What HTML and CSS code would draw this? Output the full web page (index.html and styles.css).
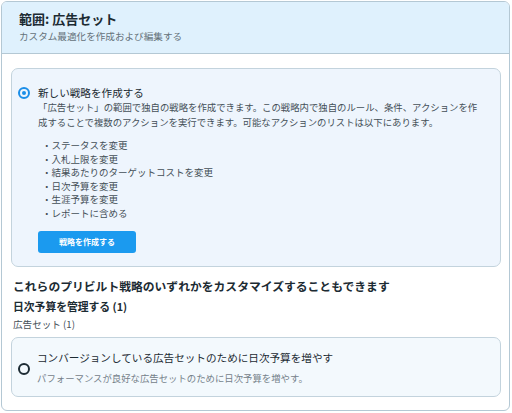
FILE: index.html
```html
<!DOCTYPE html>
<html lang="ja">
<head>
  <meta charset="UTF-8">
  <meta name="viewport" content="width=device-width, initial-scale=1.0">
  <title>範囲: 広告セット</title>
  <link rel="stylesheet" href="styles.css">
</head>
<body>

  <div class="panel">
    <div class="panel-header">
      <h1 class="panel-title">範囲: 広告セット</h1>
      <p class="panel-sub">カスタム最適化を作成および編集する</p>
    </div>

    <div class="panel-body">
      <div class="option option-selected">
        <span class="radio radio-on"></span>
        <div class="option-content">
          <div class="option-title">新しい戦略を作成する</div>
          <p class="option-desc">「広告セット」の範囲で独自の戦略を作成できます。この戦略内で独自のルール、条件、アクションを作成することで複数のアクションを実行できます。可能なアクションのリストは以下にあります。</p>
          <ul class="action-list">
            <li>ステータスを変更</li>
            <li>入札上限を変更</li>
            <li>結果あたりのターゲットコストを変更</li>
            <li>日次予算を変更</li>
            <li>生涯予算を変更</li>
            <li>レポートに含める</li>
          </ul>
          <button class="btn-primary">戦略を作成する</button>
        </div>
      </div>

      <h2 class="section-title">これらのプリビルト戦略のいずれかをカスタマイズすることもできます</h2>
      <h3 class="group-title">日次予算を管理する (1)</h3>
      <div class="group-sub">広告セット (1)</div>

      <div class="option option-plain">
        <span class="radio"></span>
        <div class="option-content">
          <div class="option-title">コンバージョンしている広告セットのために日次予算を増やす</div>
          <p class="option-desc muted">パフォーマンスが良好な広告セットのために日次予算を増やす。</p>
        </div>
      </div>
    </div>
  </div>

</body>
</html>
```

FILE: styles.css
```css
body {
  margin: 0;
  padding: 1px;
  font-family: "Noto Sans CJK JP", "Noto Sans", sans-serif;
  color: #1c2b33;
  background: #ffffff;
}
.panel {
  width: 509px;
  height: 410px;
  border: 1px solid #b4c8d4;
  border-radius: 6px;
  overflow: hidden;
  box-sizing: border-box;
}
.panel-header {
  background-color: #dff1fd;
  border-bottom: 1px solid #b4c8d4;
  padding: 8px 18px 9px 17px;
  height: 52px;
  box-sizing: border-box;
}
.panel-title {
  margin: 0;
  font-size: 13px;
  line-height: 18px;
  font-weight: bold;
}
.panel-sub {
  margin: 1px 0 0;
  font-size: 9.6px;
  line-height: 14px;
  color: #65717a;
}
.panel-body {
  padding: 14px 8px 0 9px;
}
.option {
  display: flex;
  gap: 8px;
  border: 1px solid #c3d3dd;
  border-radius: 7px;
}
.option-selected {
  background-color: #eef5fd;
  padding: 17px 18px 13px 5px;
}
.option-plain {
  background-color: #f3f9fd;
  padding: 13px 12px 10px 5px;
  align-items: center;
  margin-top: 6px;
}
.radio {
  flex: none;
  width: 12px;
  height: 12px;
  border: 2px solid #1c2b33;
  border-radius: 50%;
  box-sizing: border-box;
  margin-top: 1px;
  margin-left: 1px;
  position: relative;
}
.radio-on {
  border-color: #1b8ee8;
}
.radio-on::after {
  content: "";
  position: absolute;
  left: 2px;
  top: 2px;
  width: 4px;
  height: 4px;
  border-radius: 50%;
  background-color: #1b8ee8;
}
.option-plain .radio {
  margin-left: 1px;
  margin-right: -1px;
}
.option-content {
  flex: 1;
}
.option-title {
  font-size: 10.6px;
  line-height: 14px;
}
.option-desc {
  margin: 0;
  font-size: 9.4px;
  line-height: 15px;
  color: #444f57;
}
.muted {
  color: #75818a;
  margin-top: 6px;
}
.action-list {
  list-style: none;
  margin: 9px 0 0;
  padding: 0 0 0 4px;
  font-size: 9.5px;
  line-height: 13.6px;
  color: #444f57;
}
.action-list li::before {
  content: "・";
  margin-right: 0;
}
.btn-primary {
  margin-top: 10px;
  width: 98px;
  height: 22px;
  border: none;
  border-radius: 3px;
  background-color: #1b9aef;
  color: #ffffff;
  font-family: inherit;
  font-size: 8px;
  font-weight: bold;
  cursor: pointer;
}
.section-title {
  margin: 11px 0 0 2px;
  font-size: 11.8px;
  line-height: 16px;
  font-weight: bold;
}
.group-title {
  margin: 4px 0 0 2px;
  font-size: 10.8px;
  line-height: 16px;
  font-weight: bold;
}
.group-sub {
  margin: 3px 0 0 2px;
  font-size: 9.6px;
  line-height: 14px;
  color: #444f57;
}
```
